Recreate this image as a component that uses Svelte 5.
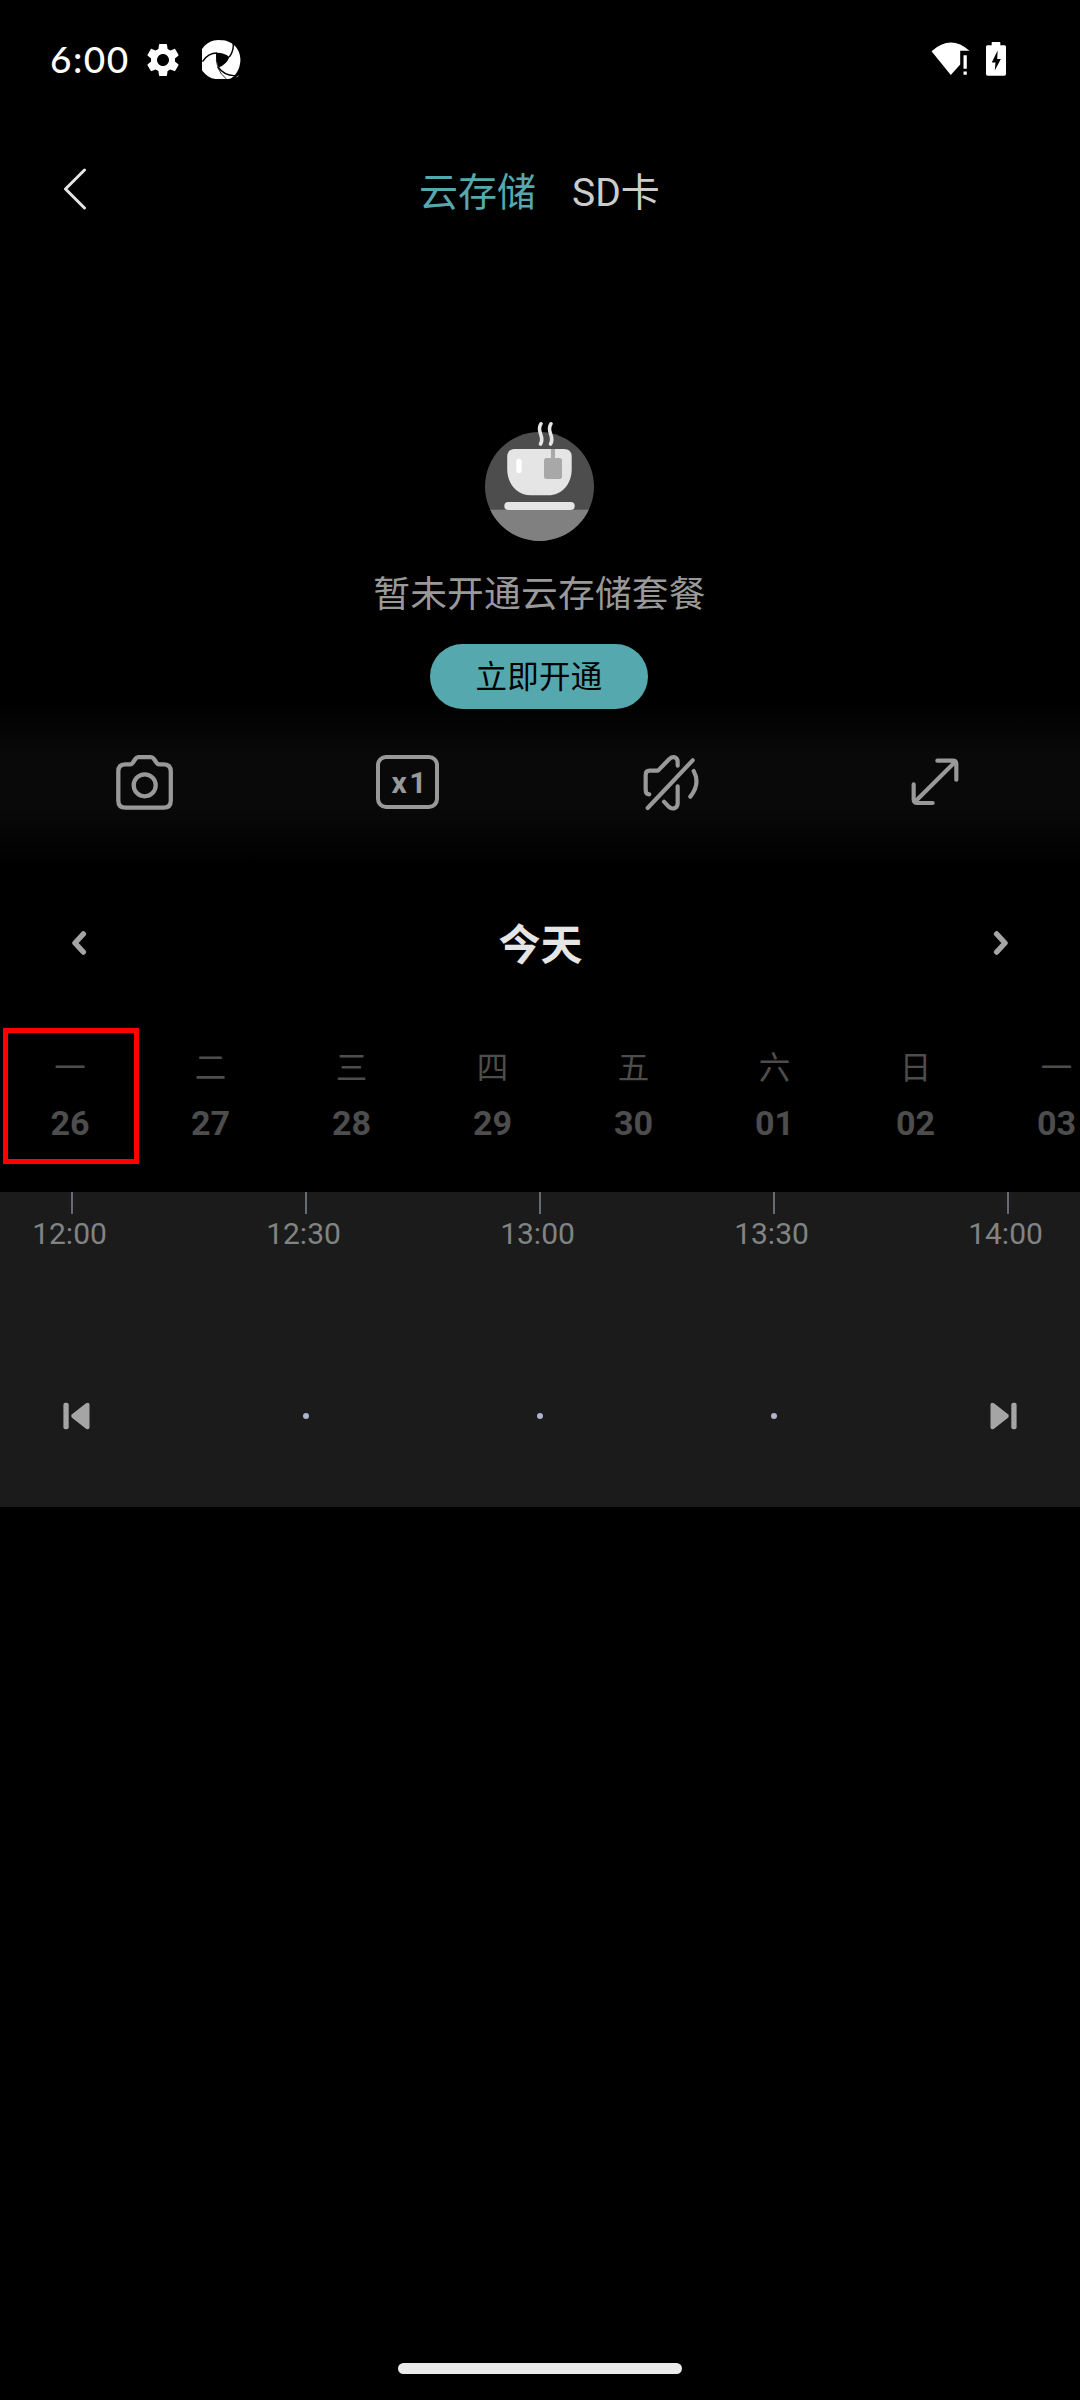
<script>
  const days = [
    ['一', '26'], ['二', '27'], ['三', '28'], ['四', '29'],
    ['五', '30'], ['六', '01'], ['日', '02'], ['一', '03']
  ];
  const times = ['12:00', '12:30', '13:00', '13:30', '14:00'];
  let selected = $state(0);
</script>

<div class="screen">
  <header class="status">
    <span class="clock">6:00</span>
    <svg class="gear" width="40" height="40" viewBox="0 0 24 24" fill="#fff">
      <path d="M19.14 12.94c.04-.3.06-.61.06-.94 0-.32-.02-.64-.07-.94l2.03-1.58c.18-.14.23-.41.12-.61l-1.92-3.32c-.12-.22-.37-.29-.59-.22l-2.39.96c-.5-.38-1.03-.7-1.62-.94L14.4 2.81c-.04-.24-.24-.41-.48-.41h-3.84c-.24 0-.43.17-.47.41L9.25 5.35c-.59.24-1.13.57-1.62.94l-2.39-.96c-.22-.08-.47 0-.59.22L2.74 8.87c-.12.21-.08.47.12.61l2.03 1.58c-.05.3-.09.63-.09.94s.02.64.07.94l-2.03 1.58c-.18.14-.23.41-.12.61l1.92 3.32c.12.22.37.29.59.22l2.39-.96c.5.38 1.03.7 1.62.94l.36 2.54c.05.24.24.41.48.41h3.84c.24 0 .44-.17.47-.41l.36-2.54c.59-.24 1.13-.56 1.62-.94l2.39.96c.22.08.47 0 .59-.22l1.92-3.32c.12-.22.07-.47-.12-.61l-2.01-1.58zM12 15.6c-1.98 0-3.6-1.62-3.6-3.6s1.62-3.6 3.6-3.6 3.6 1.62 3.6 3.6-1.62 3.6-3.6 3.6z" />
    </svg>
    <svg class="swirl" width="40" height="40" viewBox="0 0 40 40">
      <path d="M19.500.3C29 .3 38.400 8 38.400 19.500C38.400 26 36 32.500 31.500 36.500Q29 39 26 39H13.500A19.300 19.300 0 0 1 19.500.3Z" fill="#fff" />
      <path d="M14.300 12.800Q21.500 12.600 27.500 16.900Q24.300 24.600 16.700 27.400Q13.500 20 14.300 12.800Z" fill="#000" />
      <path d="M15 13Q6 13 .5 21.500M27.300 17Q33 9 30.500 0M16 27Q23 36.500 34 35.500" fill="none" stroke="#000" stroke-width="1.400" />
      <path d="M14.600 13Q12.500 30 24.500 39" fill="none" stroke="#000" stroke-width=".8" />
      <path d="M34.500 37l2-1.200" stroke="#999" stroke-width="1" />
    </svg>
    <span class="grow"></span>
    <svg width="40" height="34" viewBox="0 0 40 34" fill="#fff">
      <path d="M.5 9.200Q19.800-8 38.500 8.800H29.200V22.500L19.800 33Z" />
      <path d="M32.500 13.300h3.300v13.400h-3.300zM32.500 29.500h3.300v3.300h-3.300z" />
    </svg>
    <svg class="battery" width="20" height="34" viewBox="0 0 20 34">
      <path d="M5.700 0h8.600v3.300H18.500Q20 3.300 20 4.800V32Q20 33.700 18.300 33.700H1.700Q0 33.700 0 32V4.800Q0 3.300 1.500 3.300H5.700Z" fill="#fff" />
      <path d="M11.600 8.500L5.800 20.500H9.500L8.800 28.500L14.800 17H11.200Z" fill="#000" />
    </svg>
  </header>

  <nav class="tabs">
    <svg class="back" width="24" height="42" viewBox="0 0 24 42">
      <path d="M21.500 2L2.500 21L21.500 40" fill="none" stroke="#e5e5e5" stroke-width="3" stroke-linecap="round" stroke-linejoin="round" />
    </svg>
    <span class="tab active">云存储</span>
    <span class="tab">SD卡</span>
  </nav>

  <section class="empty">
    <svg width="110" height="120" viewBox="485 421 110 120">
      <defs>
        <clipPath id="disc"><circle cx="539.500" cy="486.500" r="54.500" /></clipPath>
      </defs>
      <circle cx="539.500" cy="486.500" r="54.500" fill="#4d4d4d" />
      <rect x="485" y="509.700" width="110" height="32" fill="#808080" clip-path="url(#disc)" />
      <path d="M515 449H564Q571.700 449 571.700 457V469C571.700 484 562 495.300 548 495.300H531C517 495.300 507.200 484 507.200 469V457Q507.200 449 515 449Z" fill="#e5e5e5" />
      <rect x="516.300" y="458.700" width="5.300" height="14.400" rx="2.600" fill="#fff" />
      <path d="M551 449h4v9h-4z" fill="#a8a8a8" />
      <rect x="544" y="458" width="18" height="21" rx="2.500" fill="#a8a8a8" />
      <rect x="504.300" y="502" width="70.400" height="8" rx="4" fill="#e5e5e5" />
      <path d="M541 423.800C535.500 432 545.500 436 540.500 444M551 423.800C545.500 432 555.500 436 550.500 444" fill="none" stroke="#e5e5e5" stroke-width="3.600" stroke-linecap="round" />
    </svg>
    <p>暂未开通云存储套餐</p>
    <button>立即开通</button>
  </section>

  <section class="tools">
    <svg width="64" height="64" viewBox="113 750 64 64">
      <path d="M125.500 764.300H130Q132 764.300 133 762.500L135.300 759Q136.600 757.200 138.500 757.200H150.800Q152.700 757.200 154 759L156.300 762.500Q157.300 764.300 159.300 764.300H163.500Q170.800 764.300 170.800 771.500V800.500Q170.800 807.700 163.500 807.700H125.500Q118.300 807.700 118.300 800.500V771.500Q118.300 764.300 125.500 764.300Z" />
      <circle cx="144.700" cy="785.300" r="11" />
    </svg>
    <span class="speed"><b>x1</b></span>
    <svg width="64" height="64" viewBox="118 89 192 192" class="wide">
      <path d="M146 222Q135 222 135 208V164Q135 151 147 151H172L206 116Q214 109 222 111Q231 114 231 125V136M141 263L276 120M231 198V250Q230 262 220 264Q212 266 204 259L190 244M279 152Q300 190 269 229" />
    </svg>
    <svg width="64" height="64" viewBox="909 92 192 192" class="wide">
      <path d="M941 195V240Q941 251 952 251H998M945 247L1065 128M1012 124H1058Q1069 124 1069 135V181" />
    </svg>
  </section>

  <section class="date">
    <svg width="16" height="26" viewBox="0 0 16 26"><path d="M12.300 4L4 13L12.300 22" /></svg>
    <h1>今天</h1>
    <svg width="16" height="26" viewBox="0 0 16 26"><path d="M3.700 4L12 13L3.700 22" /></svg>
  </section>

  <section class="days">
    {#each days as [name, number], i}
      <div class="day" class:selected={selected === i}>
        <span class="name">{name}</span>
        <span class="number">{number}</span>
      </div>
    {/each}
  </section>

  <section class="timeline">
    <div class="scale">
      {#each times as time}
        <div class="mark"><i></i><span>{time}</span></div>
      {/each}
    </div>
    <div class="scale controls">
      <svg width="54" height="30" viewBox="45 1401 54 30">
        <rect x="63.400" y="1402.700" width="5.300" height="26.600" rx="2" />
        <path d="M72 1414.300L86 1403.200Q89.500 1401.500 89.500 1405V1427Q89.500 1430.500 86 1428.800L72 1417.700Q70.300 1416 72 1414.300Z" />
      </svg>
      <span class="dot"></span>
      <span class="dot"></span>
      <span class="dot"></span>
      <svg width="54" height="30" viewBox="981 1401 54 30">
        <rect x="1011.300" y="1402.700" width="5.300" height="26.600" rx="2" />
        <path d="M1008 1414.300L994 1403.200Q990.500 1401.500 990.500 1405V1427Q990.500 1430.500 994 1428.800L1008 1417.700Q1009.700 1416 1008 1414.300Z" />
      </svg>
    </div>
  </section>

  <footer><span class="handle"></span></footer>
</div>

<style>
  :global(body) { margin: 0; background: #000; }
  .screen {
    width: 1080px; height: 2400px; overflow: hidden; background: #000;
    display: flex; flex-direction: column;
    font-family: Roboto, "Noto Sans CJK SC", sans-serif;
  }
  .status {
    height: 118px; box-sizing: border-box; padding: 0 74px 0 50px;
    display: flex; align-items: center; color: #fff;
  }
  .clock { font: 500 37px/40px Lato, sans-serif; letter-spacing: 1.500px; width: 93px; }
  .gear { margin-top: 2px; }
  .swirl { margin-left: 19px; margin-top: 2px; }
  .grow { flex: 1; }
  .battery { margin-left: 15px; }

  .tabs {
    height: 144px; display: grid; align-items: center;
    grid-template-columns: 419px 119px auto;
    font-size: 39px; line-height: 58px; color: #ccc;
    white-space: nowrap;
  }
  .tab { padding-top: 5px; }
  .tab:last-child { padding-left: 34px; }
  .tab.active { color: #55a8ae; }
  .back { margin: 0 0 2px 63px; }

  .empty {
    position: relative; z-index: 1;
    height: 438px; box-sizing: border-box; padding: 159px 2px 0 0;
    display: flex; flex-direction: column; align-items: center;
  }
  .empty svg { flex: none; margin-left: 1px; }
  .empty p { margin: 27px 0 22px 1px; font-size: 36.75px; letter-spacing: .2px; line-height: 54px; color: #999; }
  .empty button {
    flex: none; width: 218px; height: 65px; padding: 3px 0 0; border: 0; border-radius: 33px;
    background: #55a8ae; color: #000; letter-spacing: .3px;
    font: 31.5px/62px Roboto, "Noto Sans CJK SC", sans-serif;
  }

  .tools {
    height: 164px; box-sizing: border-box; padding: 0 13px;
    display: grid; grid-template-columns: repeat(4, 1fr); place-items: center;
    background: linear-gradient(#000, #090909 35%, #090909 65%, #000);
  }
  .tools svg { fill: none; stroke: #999; stroke-width: 4.300; stroke-linecap: round; stroke-linejoin: round; }
  .tools .wide { stroke-width: 12.500; }
  .speed {
    width: 63px; height: 54px; box-sizing: border-box; border: 4px solid #999; border-radius: 10px;
    display: flex; align-items: center; justify-content: center; color: #999; margin-right: 1px;
  }
  .speed b { font-size: 30px; line-height: 30px; letter-spacing: 2.500px; padding: 1px 0 0 5px; }

  .date {
    height: 158px; padding: 0 71px;
    display: flex; align-items: center; justify-content: space-between;
  }
  .date svg { fill: none; stroke: #a5a5a5; stroke-width: 5.500; stroke-linecap: round; stroke-linejoin: round; }
  .date h1 { margin: 0; padding: 6px 0 0 1px; font-size: 42px; line-height: 60px; color: #e5e5e5; font-weight: 700; }

  .days { height: 170px; display: grid; grid-template-columns: 140px repeat(7, 141px); }
  .day {
    position: relative; padding-top: 24px; color: #4d4d4d;
    display: flex; flex-direction: column; align-items: center;
  }
  .name { font-size: 31.500px; line-height: 46px; }
  .number { font-size: 34.125px; line-height: 40px; font-weight: 700; margin-top: 11px; }
  .day.selected::after {
    content: ""; position: absolute; left: 3px; top: 6px;
    width: 126px; height: 126px; border: 5px solid #f00;
  }

  .timeline { height: 315px; background: #1b1b1b; overflow: hidden; }
  .scale { display: grid; grid-template-columns: repeat(5, 234px); margin-left: -45px; justify-items: center; }
  .mark { display: flex; flex-direction: column; align-items: center; }
  .mark i { width: 2px; height: 22px; background: #666a72; }
  .mark span { font-size: 30px; line-height: 36px; color: #808484; margin: 2px 5px 0 0; }
  .controls { height: 30px; margin-top: 149px; align-items: center; }
  .controls svg { fill: #a5a5a5; }
  .dot { width: 6px; height: 6px; border-radius: 50%; background: #b0b3cd; }

  footer { flex: 1; display: flex; align-items: flex-end; justify-content: center; padding-bottom: 26px; }
  .handle { width: 284px; height: 11px; border-radius: 5.500px; background: #ebebeb; }
</style>
